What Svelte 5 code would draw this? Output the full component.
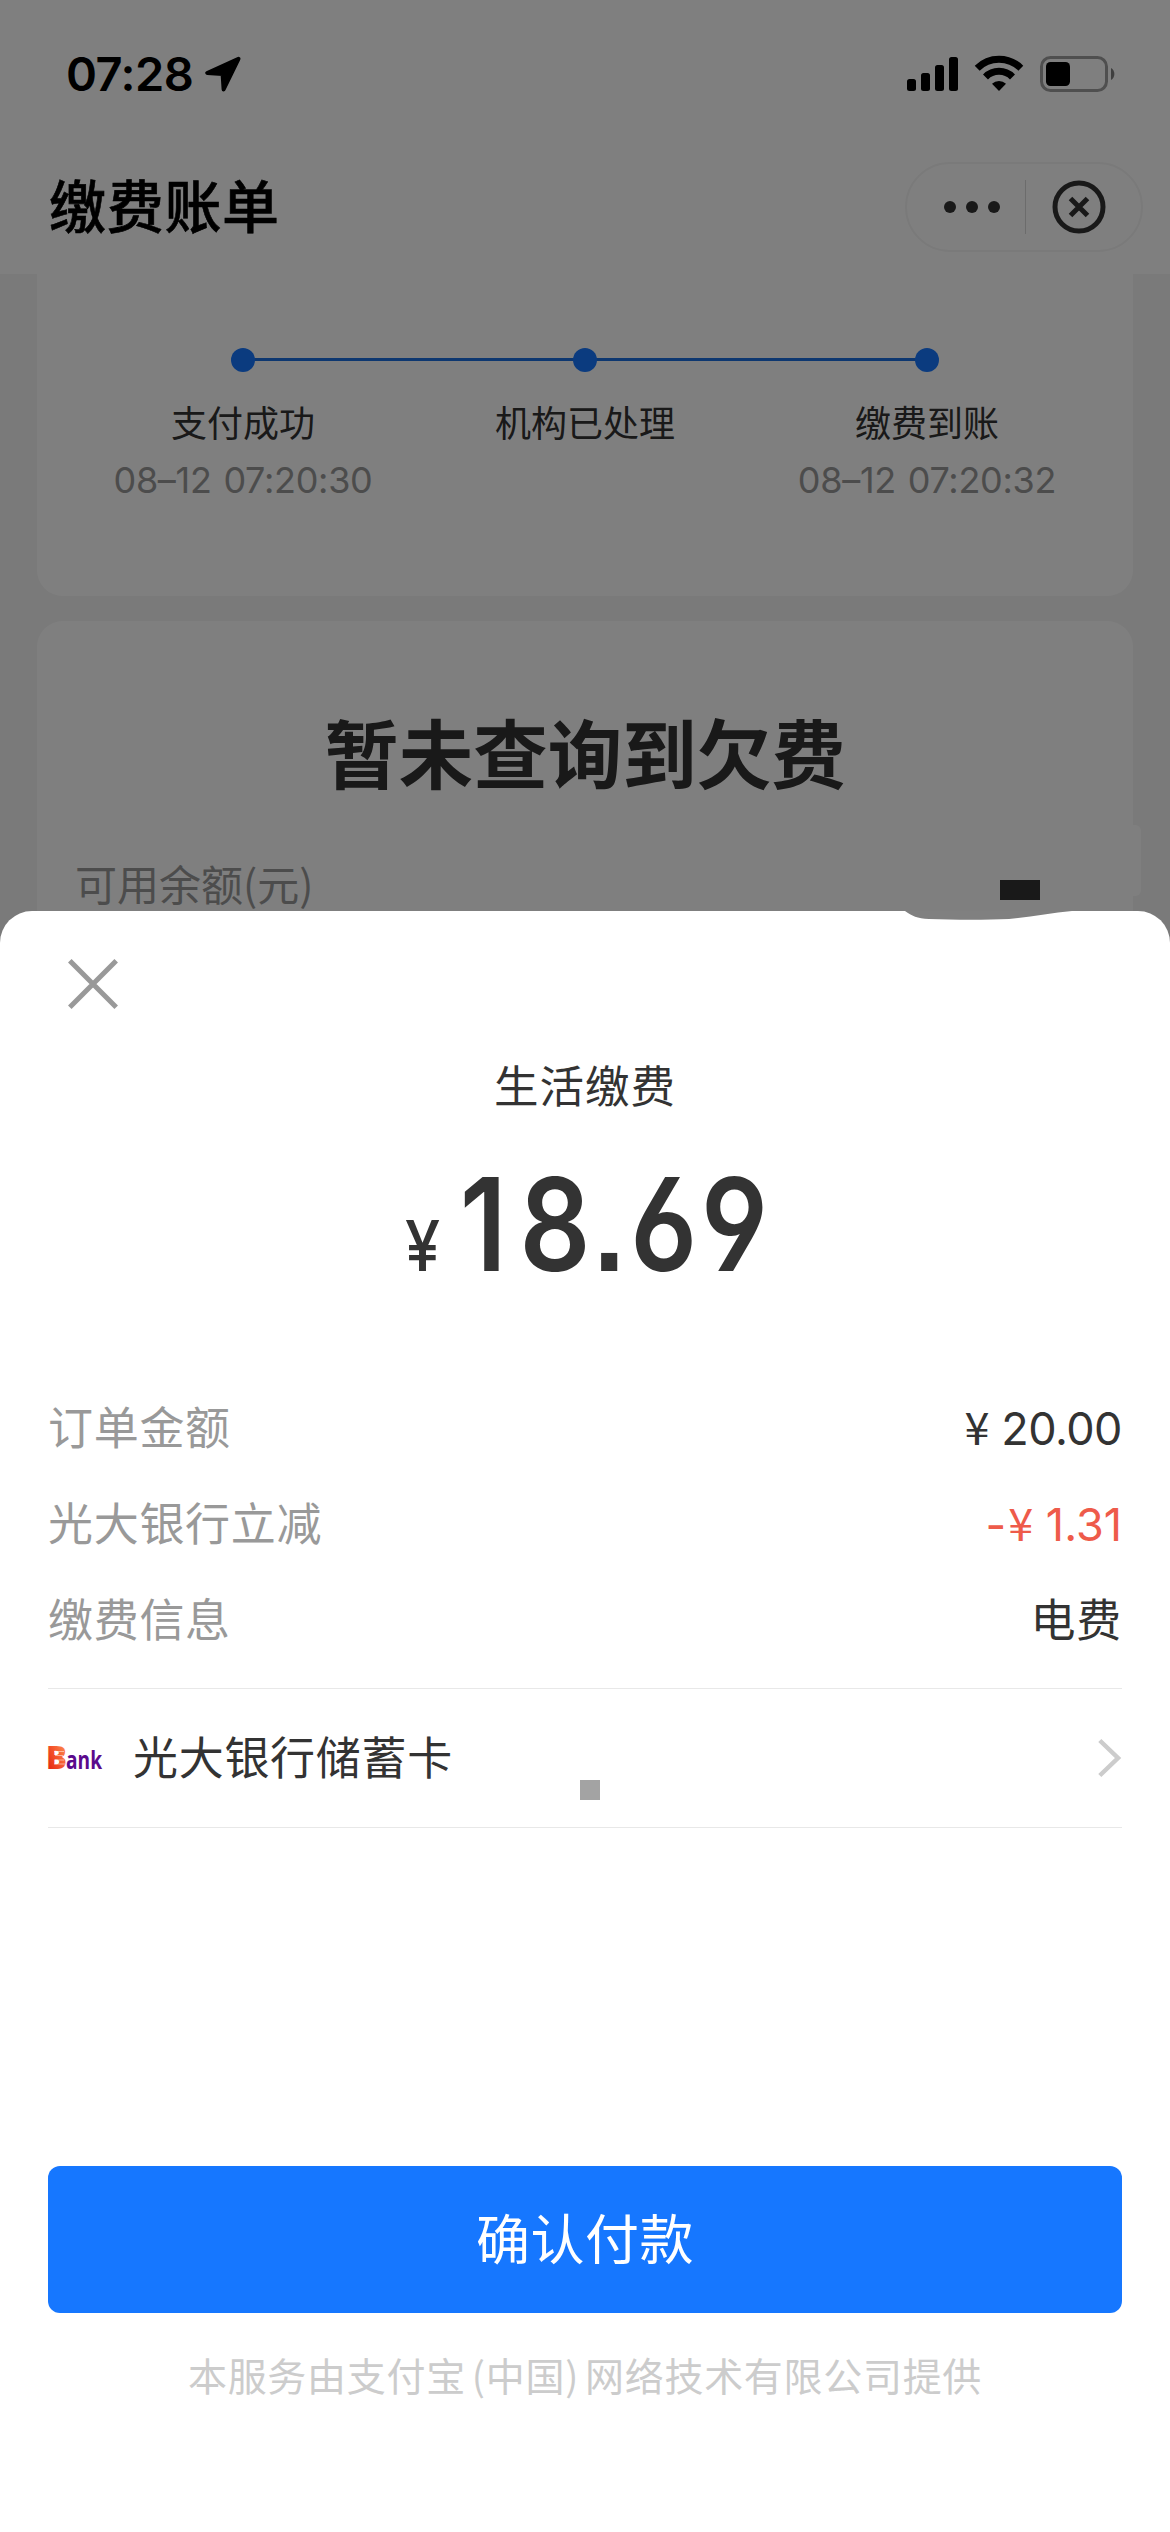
<script lang="ts">
   interface Step {
      label: string;
      time?: string;
   }

   interface Detail {
      label: string;
      value: string;
      kind: 'money' | 'discount' | 'text';
   }

   const steps: Step[] = [
      { label: '支付成功', time: '08–12 07:20:30' },
      { label: '机构已处理' },
      { label: '缴费到账', time: '08–12 07:20:32' }
   ];

   const details: Detail[] = [
      { label: '订单金额', value: '20.00', kind: 'money' },
      { label: '光大银行立减', value: '1.31', kind: 'discount' },
      { label: '缴费信息', value: '电费', kind: 'text' }
   ];

   let open = $state(true);
</script>

<div class="screen">
   <div class="status-bar">
      <div class="clock">
         <span>07:28</span>
         <svg width="38" height="36" viewBox="0 0 38 36" aria-hidden="true">
            <path d="M34.5 2.8 L3.2 17 L18.6 18 L19.6 33.4 Z" stroke="#000" stroke-width="4" stroke-linejoin="round" />
         </svg>
      </div>
      <div class="indicators">
         <svg width="52" height="36" viewBox="0 0 52 36" aria-hidden="true">
            <rect x="0" y="23" width="9" height="12" rx="2.5" />
            <rect x="14" y="17" width="9" height="18" rx="2.5" />
            <rect x="28" y="9" width="9" height="26" rx="2.5" />
            <rect x="42" y="1" width="9" height="34" rx="2.5" />
         </svg>
         <svg class="wifi" width="50" height="37" viewBox="0 0 50 37" aria-hidden="true">
            <g fill="none" stroke="#000" stroke-width="7">
               <path d="M3.2 13.2 A31 31 0 0 1 46.8 13.2" />
               <path d="M11.5 22 A19 19 0 0 1 38.5 22" />
            </g>
            <path d="M25 36 L18 28.8 A10 10 0 0 1 32 28.8 Z" />
         </svg>
         <svg class="battery" width="76" height="36" viewBox="0 0 76 36" aria-hidden="true">
            <rect x="1.5" y="1.5" width="65" height="33" rx="9" fill="none" stroke="#000" stroke-opacity=".38" stroke-width="3" />
            <rect x="6" y="6" width="24" height="24" rx="4.5" />
            <path d="M71 12 A7 7 0 0 1 71 24 Z" fill-opacity=".5" />
         </svg>
      </div>
   </div>

   <header class="nav">
      <h1>缴费账单</h1>
      <div class="capsule">
         <button class="more" aria-label="更多"><i></i><i></i><i></i></button>
         <button class="exit" aria-label="关闭">
            <svg width="54" height="54" viewBox="0 0 54 54" fill="none" stroke="#333" stroke-width="5">
               <circle cx="27" cy="27" r="24" />
               <path d="M18.5 18.5 L35.5 35.5 M35.5 18.5 L18.5 35.5" />
            </svg>
         </button>
      </div>
   </header>

   <main>
      <section class="card progress">
         {#each steps as step}
            <div class="step">
               <span class="dot"></span>
               <span class="step-label">{step.label}</span>
               {#if step.time}
                  <span class="step-time">{step.time}</span>
               {/if}
            </div>
         {/each}
      </section>

      <section class="card bill">
         <h2>暂未查询到欠费</h2>
         <div class="balance">
            <span>可用余额(元)</span>
            <span class="redacted"></span>
         </div>
         <span class="smudge"></span>
      </section>
   </main>

   {#if open}
      <div class="mask"></div>
      <div class="sheet" role="dialog" aria-modal="true">
         <svg class="smear" width="170" height="10" viewBox="0 0 170 10" aria-hidden="true">
            <path d="M0 0 C7 5 12 7.5 24 8 C50 9 82 9 104 8 C126 6 146 2 167 0 Z" fill="#808080" />
         </svg>

         <button class="close" onclick={() => (open = false)} aria-label="关闭">
            <svg width="50" height="50" viewBox="0 0 50 50" stroke="#999" stroke-width="5">
               <path d="M1.8 1.8 L48.2 48.2 M48.2 1.8 L1.8 48.2" />
            </svg>
         </button>

         <p class="subject">生活缴费</p>
         <p class="amount">
            <span class="yen">¥</span>
            <span class="figure"><span class="wide">1</span><span class="tight">8.</span>69</span>
         </p>

         <dl class="details">
            {#each details as item}
               <div class="detail">
                  <dt>{item.label}</dt>
                  <dd class={item.kind}>
                     {#if item.kind === 'text'}
                        {item.value}
                     {:else}
                        {#if item.kind === 'discount'}<span class="minus">-</span>{/if}<span class="sign">¥</span> {item.value}
                     {/if}
                  </dd>
               </div>
            {/each}
         </dl>

         <button class="method">
            <svg class="bank" width="56" height="40" viewBox="0 -8 56 40" aria-hidden="true">
               <defs>
                  <linearGradient id="bank-b" x1="1" y1="0" x2="0" y2="1">
                     <stop offset="0" stop-color="#ffa45c" />
                     <stop offset=".5" stop-color="#f4532c" />
                     <stop offset="1" stop-color="#dc1208" />
                  </linearGradient>
               </defs>
               <text class="bank-b" x="-2" y="23" textLength="21" lengthAdjust="spacingAndGlyphs" fill="url(#bank-b)">B</text>
               <path d="M6 5.5 H16 M7 9.5 H15 M7 14 H16 M6 18 H17" stroke="#fff" stroke-opacity=".5" stroke-width="1" />
               <text class="bank-ank" x="18" y="23" textLength="36" lengthAdjust="spacingAndGlyphs" fill="#5b0a8c">ank</text>
            </svg>
            <span class="method-name">光大银行储蓄卡</span>
            <i class="speck"></i>
            <svg class="chevron" width="24" height="40" viewBox="0 0 24 40" fill="none" stroke="#ccc" stroke-width="4.5" aria-hidden="true">
               <path d="M1.8 2.5 L20 20 L1.8 37.5" />
            </svg>
         </button>

         <button class="confirm">确认付款</button>
         <p class="provider">本服务由支付宝<span class="lp">(</span>中国<span class="rp">)</span>网络技术有限公司提供</p>
      </div>
   {/if}
</div>

<style>
   :global(body) {
      margin: 0;
      background: #fff;
   }

   .screen {
      position: relative;
      box-sizing: border-box;
      width: 1170px;
      height: 2532px;
      overflow: hidden;
      background: #f5f5f5;
      color: #333;
      font-family: 'Noto Sans CJK SC', sans-serif;
   }

   h1, h2, p, dl, dd {
      margin: 0;
   }

   button {
      border: none;
      background: none;
      padding: 0;
      font: inherit;
      color: inherit;
      cursor: pointer;
   }

   svg {
      display: block;
   }

   .status-bar {
      display: flex;
      justify-content: space-between;
      box-sizing: border-box;
      height: 140px;
      padding: 56px 54px 0 66px;
      background: #fff;
      color: #000;
   }

   .clock {
      display: flex;
      gap: 11px;
      height: 36px;
      font: 600 47px/36px Inter, sans-serif;
      letter-spacing: -0.5px;
   }

   .indicators {
      display: flex;
      height: 36px;
   }

   .wifi {
      margin-left: 15px;
      margin-top: -1px;
   }

   .battery {
      margin-left: 16px;
   }

   .nav {
      display: flex;
      align-items: center;
      justify-content: space-between;
      box-sizing: border-box;
      height: 134px;
      padding: 0 27px 0 49px;
      background: #fff;
   }

   h1 {
      color: #000;
      font-size: 57px;
      font-weight: 500;
      line-height: 80px;
      letter-spacing: 0.7px;
      margin-top: -9px;
      -webkit-text-stroke: 0.6px #000;
   }

   .capsule {
      display: flex;
      align-items: center;
      box-sizing: border-box;
      width: 238px;
      height: 90px;
      border: 2px solid #f5f5f5;
      border-radius: 45px;
   }

   .more {
      display: flex;
      align-items: center;
      justify-content: center;
      gap: 10px;
      width: 119px;
      height: 54px;
      padding-left: 12px;
      box-sizing: border-box;
      border-right: 1px solid #d8d8d8;
   }

   .more i {
      width: 12px;
      height: 12px;
      border-radius: 50%;
      background: #333;
   }

   .exit {
      margin-left: 26px;
   }

   main {
      display: flex;
      flex-direction: column;
      gap: 25px;
      padding: 0 37px;
   }

   .card {
      background: #fff;
      border-radius: 26px;
   }

   .progress {
      display: grid;
      grid-template-columns: repeat(3, 342px);
      justify-content: center;
      box-sizing: border-box;
      height: 322px;
      padding-top: 74px;
      border-radius: 0 0 26px 26px;
   }

   .step {
      position: relative;
      display: flex;
      flex-direction: column;
      align-items: center;
   }

   .step + .step::before {
      content: '';
      position: absolute;
      top: 10px;
      right: 50%;
      width: 342px;
      height: 3px;
      background: #1a6ee0;
   }

   .dot {
      position: relative;
      width: 24px;
      height: 24px;
      border-radius: 50%;
      background: #1677ff;
      z-index: 1;
   }

   .step-label {
      margin-top: 23px;
      font-size: 36px;
      line-height: 52px;
   }

   .step-time {
      margin-top: 9px;
      color: #999;
      font: 400 36px/48px Inter, sans-serif;
      letter-spacing: -0.3px;
      word-spacing: 2px;
   }

   .bill {
      position: relative;
      box-sizing: border-box;
      height: 500px;
      padding: 80px 38px 0;
   }

   h2 {
      font-size: 74.5px;
      font-weight: 700;
      line-height: 100px;
      text-align: center;
   }

   .balance {
      display: flex;
      align-items: center;
      justify-content: space-between;
      height: 60px;
      margin-top: 52px;
      color: #999;
      font-size: 42px;
      line-height: 60px;
   }

   .redacted {
      width: 40px;
      height: 20px;
      margin: 13px 55px 0 0;
      background: #333;
   }

   .smudge {
      position: absolute;
      top: 204px;
      right: -8px;
      width: 20px;
      height: 71px;
      border-radius: 6px;
      background: #fff;
   }

   .mask {
      position: absolute;
      inset: 0;
      background: rgba(0, 0, 0, 0.5);
      z-index: 2;
   }

   .sheet {
      position: absolute;
      inset: 911px 0 0;
      display: flex;
      flex-direction: column;
      box-sizing: border-box;
      padding: 0 48px;
      border-radius: 32px 32px 0 0;
      background: #fff;
      z-index: 3;
   }

   .smear {
      position: absolute;
      top: 0;
      left: 905px;
   }

   .close {
      align-self: flex-start;
      margin: 48px 0 0 20px;
   }

   .subject {
      margin-top: 43px;
      font-size: 44.5px;
      line-height: 64px;
      letter-spacing: 1px;
      text-align: center;
   }

   .amount {
      display: flex;
      justify-content: center;
      align-items: baseline;
      height: 140px;
      margin-top: 38px;
      padding-left: 34px;
      font-family: Inter, sans-serif;
      font-weight: 600;
      line-height: 140px;
   }

   .yen {
      font-size: 70px;
      font-weight: 500;
      transform: scaleX(0.9);
   }

   .figure {
      margin-left: -8px;
      font-size: 129px;
      font-feature-settings: 'cv03', 'cv04', 'ss07';
      letter-spacing: 8px;
      transform: scaleX(0.86);
   }

   .wide {
      letter-spacing: 15px;
   }

   .tight {
      letter-spacing: 4px;
   }

   .details {
      display: flex;
      flex-direction: column;
      gap: 32px;
      padding: 100px 0 38px;
      border-bottom: 1px solid #e8e8e8;
   }

   .detail {
      display: flex;
      justify-content: space-between;
      height: 64px;
      font-size: 45px;
      line-height: 64px;
      letter-spacing: 0.7px;
   }

   dt {
      color: #999;
   }

   .money,
   .discount {
      font-family: Inter, 'Noto Sans CJK SC', sans-serif;
      font-size: 45px;
      letter-spacing: -0.5px;
   }

   .discount {
      color: #ee5b4a;
      letter-spacing: 0;
   }

   .minus {
      margin-right: 2px;
   }

   .sign {
      font-family: 'Noto Sans CJK SC', sans-serif;
   }

   .method {
      display: flex;
      align-items: center;
      position: relative;
      box-sizing: border-box;
      height: 139px;
      border-bottom: 1px solid #e8e8e8;
      font-size: 45px;
      line-height: 64px;
      letter-spacing: 0.7px;
   }

   .method-name {
      padding-bottom: 4px;
   }

   .bank {
      margin-right: 29px;
      overflow: visible;
      letter-spacing: 0;
   }

   .bank-b {
      font: 800 31px 'Open Sans', sans-serif;
   }

   .bank-ank {
      font: 700 25px 'Open Sans', sans-serif;
   }

   .speck {
      position: absolute;
      left: 532px;
      top: 91px;
      width: 20px;
      height: 20px;
      background: #a3a3a3;
   }

   .chevron {
      margin-left: auto;
   }

   .confirm {
      height: 147px;
      margin-top: 338px;
      padding-bottom: 6px;
      border-radius: 12px;
      background: #1677ff;
      color: #fff;
      font-size: 54px;
      line-height: 80px;
      letter-spacing: 0.5px;
   }

   .provider {
      margin-top: 33px;
      color: #ccc;
      font-size: 39px;
      line-height: 56px;
      letter-spacing: 0.7px;
      text-align: center;
      white-space: nowrap;
   }

   .lp {
      margin-left: 6px;
   }

   .rp {
      margin-right: 6px;
   }
</style>
